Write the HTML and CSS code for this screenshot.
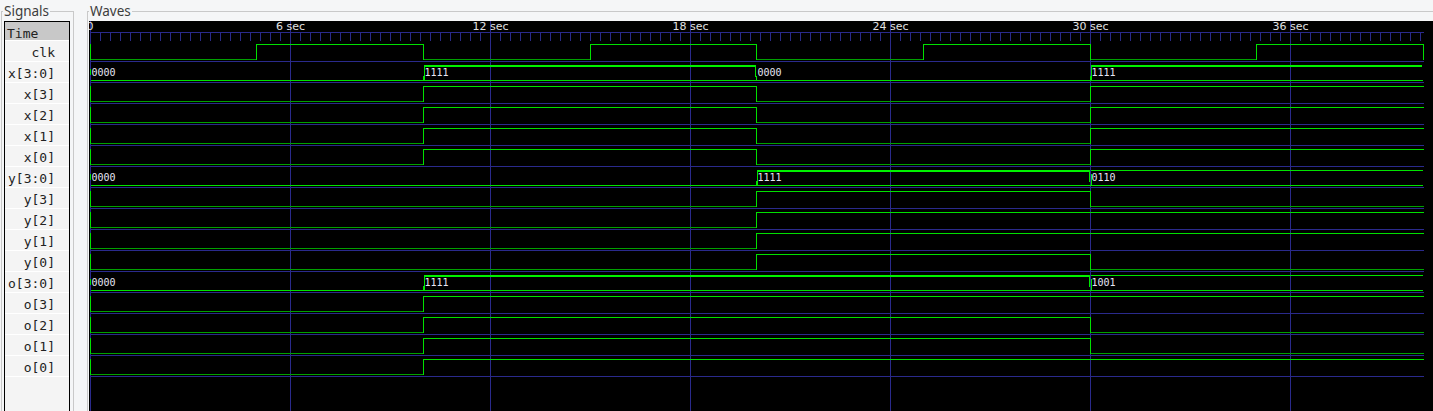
FILE: index.html
```html
<!DOCTYPE html>
<html>
<head>
<meta charset="utf-8">
<title>GTKWave</title>
<link rel="stylesheet" href="styles.css">
</head>
<body>
<div class="pane signals">
  <div class="legend">Signals</div>
  <div class="siglist">
    <div class="time-row">Time</div>
    <div class="sig">clk</div>
    <div class="sig">x[3:0]</div>
    <div class="sig">x[3]</div>
    <div class="sig">x[2]</div>
    <div class="sig">x[1]</div>
    <div class="sig">x[0]</div>
    <div class="sig">y[3:0]</div>
    <div class="sig">y[3]</div>
    <div class="sig">y[2]</div>
    <div class="sig">y[1]</div>
    <div class="sig">y[0]</div>
    <div class="sig">o[3:0]</div>
    <div class="sig">o[3]</div>
    <div class="sig">o[2]</div>
    <div class="sig">o[1]</div>
    <div class="sig">o[0]</div>
  </div>
</div>
<div class="pane waves">
  <div class="legend">Waves</div>
  <svg class="wave" width="1350" height="395" viewBox="89 21 1350 395" xmlns="http://www.w3.org/2000/svg">
    <defs>
      <pattern id="ticks" x="90" y="32" width="10" height="9" patternUnits="userSpaceOnUse">
        <rect class="tick" x="0" y="0" width="1" height="9"/>
      </pattern>
      <g id="xbit">
        <path class="lo" d="M90 59.5H424M756 59.5H1091"/>
        <path class="hi" d="M423 44.5H757M1090 44.5H1424"/>
        <path class="hi" d="M90.5 44V60M423.5 44V60M756.5 44V60M1090.5 44V60"/>
      </g>
      <g id="ypulse">
        <path class="lo" d="M90 59.5H757M1090 59.5H1424"/>
        <path class="hi" d="M756 44.5H1091"/>
        <path class="hi" d="M90.5 44V60M756.5 44V60M1090.5 44V60"/>
      </g>
      <g id="ystep">
        <path class="lo" d="M90 59.5H757"/>
        <path class="hi" d="M756 44.5H1424"/>
        <path class="hi" d="M90.5 44V60M756.5 44V60"/>
      </g>
      <g id="ostep">
        <path class="lo" d="M90 59.5H424"/>
        <path class="hi" d="M423 44.5H1424"/>
        <path class="hi" d="M90.5 44V60M423.5 44V60"/>
      </g>
      <g id="opulse">
        <path class="lo" d="M90 59.5H424M1090 59.5H1424"/>
        <path class="hi" d="M423 44.5H1091"/>
        <path class="hi" d="M90.5 44V60M423.5 44V60M1090.5 44V60"/>
      </g>
    </defs>

    <rect class="bg" x="89" y="21" width="1350" height="395"/>
    <path class="grid" d="M90.5 21V416M290.5 21V416M490.5 21V416M690.5 21V416M890.5 21V416M1090.5 21V416M1290.5 21V416"/>
    <rect x="90" y="32" width="1331" height="9" fill="url(#ticks)"/>
    <path class="grid" d="M90 32.5H1424"/>
    <path class="grid" d="M90 61.5H1424M90 82.5H1424M90 103.5H1424M90 124.5H1424M90 145.5H1424M90 166.5H1424M90 187.5H1424M90 208.5H1424M90 229.5H1424M90 250.5H1424M90 271.5H1424M90 292.5H1424M90 313.5H1424M90 334.5H1424M90 355.5H1424M90 376.5H1424"/>

    <!-- clk -->
    <path class="lo" d="M90 59.5H257M423 59.5H591M756 59.5H924M1090 59.5H1257"/>
    <path class="hi" d="M256 44.5H424M590 44.5H757M923 44.5H1091M1256 44.5H1424"/>
    <path class="hi" d="M90.5 44V60M256.5 44V60M423.5 44V60M590.5 44V60M756.5 44V60M923.5 44V60M1090.5 44V60M1256.5 44V60M1423.5 44V60"/>

    <!-- x[3:0] -->
    <g>
      <path class="bus" d="M91 80.5H1423"/>
      <rect class="thick" x="424" y="65" width="332" height="2"/>
      <rect class="thick" x="1091" y="65" width="331" height="2"/>
      <path class="bus" d="M90.5 69V75M423.5 76V81M424.5 65V81M755.5 65V77M756.5 76V81M1090.5 76V81M1091.5 65V81"/>
      <text class="val" x="91.5" y="76">0000</text>
      <text class="val" x="424.5" y="76">1111</text>
      <text class="val" x="757.5" y="76">0000</text>
      <text class="val" x="1091.5" y="76">1111</text>
    </g>
    <use href="#xbit" y="42"/>
    <use href="#xbit" y="63"/>
    <use href="#xbit" y="84"/>
    <use href="#xbit" y="105"/>

    <!-- y[3:0] -->
    <g transform="translate(0,105)">
      <path class="bus" d="M91 80.5H1423"/>
      <rect class="thick" x="757" y="65" width="332" height="2"/>
      <path class="bus" d="M1091 65.5H1423"/>
      <path class="bus" d="M90.5 69V75M756.5 76V81M757.5 65V81M1089.5 65V77M1091.5 69V81"/>
      <text class="val" x="91.5" y="76">0000</text>
      <text class="val" x="757.5" y="76">1111</text>
      <text class="val" x="1091.5" y="76">0110</text>
    </g>
    <use href="#ypulse" y="147"/>
    <use href="#ystep" y="168"/>
    <use href="#ystep" y="189"/>
    <use href="#ypulse" y="210"/>

    <!-- o[3:0] -->
    <g transform="translate(0,210)">
      <path class="bus" d="M91 80.5H1423"/>
      <rect class="thick" x="424" y="65" width="665" height="2"/>
      <path class="bus" d="M1091 65.5H1423"/>
      <path class="bus" d="M90.5 69V75M423.5 76V81M424.5 65V81M1089.5 65V77M1091.5 69V81"/>
      <text class="val" x="91.5" y="76">0000</text>
      <text class="val" x="424.5" y="76">1111</text>
      <text class="val" x="1091.5" y="76">1001</text>
    </g>
    <use href="#ostep" y="252"/>
    <use href="#opulse" y="273"/>
    <use href="#opulse" y="294"/>
    <use href="#ostep" y="315"/>

    <g class="axis-label">
      <text x="90" y="30">0</text>
      <text x="290.5" y="30">6 sec</text>
      <text x="490.5" y="30">12 sec</text>
      <text x="690.5" y="30">18 sec</text>
      <text x="890.5" y="30">24 sec</text>
      <text x="1090.5" y="30">30 sec</text>
      <text x="1290.5" y="30">36 sec</text>
    </g>
  </svg>
</div>
</body>
</html>
```

FILE: styles.css
```css
html, body {
  margin: 0;
  padding: 0;
}

body {
  width: 1433px;
  height: 411px;
  overflow: hidden;
  background: #f5f6f7;
  display: flex;
  align-items: flex-start;
}

.pane {
  flex-shrink: 0;
  box-sizing: border-box;
  height: 420px;
  margin-top: 11px;
  border: 1px solid #c9c9c9;
  border-bottom: 0;
}

.signals {
  width: 73px;
  margin-left: 1px;
}

.waves {
  width: 1400px;
  margin-left: 13px;
}

.legend {
  width: fit-content;
  height: 18px;
  margin: -10px 0 0 1px;
  padding: 0 1px;
  background: #f5f6f7;
  font: 13.5px "Noto Sans", "DejaVu Sans", sans-serif;
  line-height: 18px;
  color: #3d3d3d;
}

.siglist {
  width: 64px;
  height: 400px;
  margin: 1px 0 0 2px;
  border: 1px solid #000;
  background: #f4f4f4;
  font: 13px "DejaVu Sans Mono", monospace;
  color: #222;
}

.time-row {
  height: 18px;
  line-height: 23px;
  padding-left: 2px;
  background: #c8c8c8;
  border-bottom: 1px solid #fff;
}

.sig {
  height: 20px;
  line-height: 23px;
  padding-right: 14px;
  text-align: right;
  border-bottom: 1px solid #fff;
}

.wave {
  display: block;
  margin: 1px 0 0 1px;
}

.bg {
  fill: #000;
}

.grid {
  fill: none;
  stroke: #2a2a8c;
  stroke-width: 1;
}

.tick {
  fill: #2a2a8c;
}

.lo {
  fill: none;
  stroke: #00a000;
  stroke-width: 1;
}

.hi {
  fill: none;
  stroke: #00e000;
  stroke-width: 1;
}

.bus {
  fill: none;
  stroke: #00e400;
  stroke-width: 1;
}

.thick {
  fill: #00f200;
}

.val {
  font: 10px "DejaVu Sans Mono", monospace;
  fill: #e6e6f4;
}

.axis-label text {
  font: 11px "DejaVu Sans", sans-serif;
  fill: #e2e2e2;
  text-anchor: middle;
}
```
